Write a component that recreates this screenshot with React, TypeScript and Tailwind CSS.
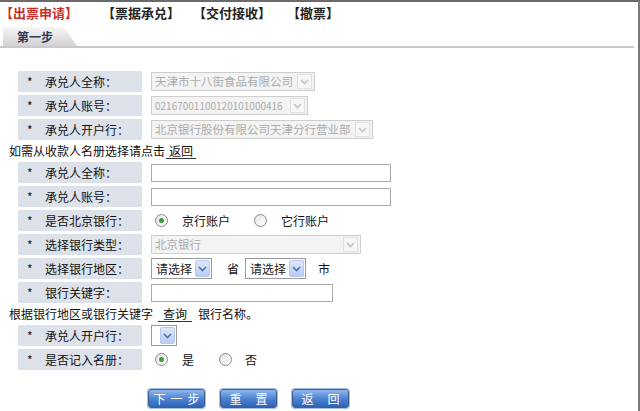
import React from 'react';

const font = "font-['SimSun','Noto_Sans_CJK_SC',sans-serif]";

function Chevron({ color }: { color: string }) {
  return (
    <svg width="9" height="6" viewBox="0 0 9 6">
      <path d="M1 1 L4.5 4.5 L8 1" fill="none" stroke={color} strokeWidth="1.6" />
    </svg>
  );
}

function DisabledSelect({ text, width, mono }: { text: string; width: string; mono?: boolean }) {
  return (
    <div className={`flex h-[19px] items-center border border-[#cdcdcd] bg-[#f3f3f3] ${width}`}>
      <span className={`min-w-0 flex-1 overflow-hidden whitespace-nowrap pl-[3px] text-[#ababab] ${mono ? 'text-[10px]' : 'text-[11.5px]'}`}>{text}</span>
      <span className="mr-[2px] flex h-[15px] w-[15px] shrink-0 items-center justify-center border border-[#e0e0e0] bg-[#f6f6f6]">
        <Chevron color="#c4c4c4" />
      </span>
    </div>
  );
}

function BlueSelect({ text, width }: { text: string; width: string }) {
  return (
    <div className={`flex h-[21px] items-center border border-[#9a9a9a] bg-white ${width}`}>
      <span className="flex-1 pl-[4px] text-[12px] text-[#222]">{text}</span>
      <span className="mr-[1px] flex h-[17px] w-[15px] items-center justify-center rounded-[2px] border border-[#b6c8ef] bg-gradient-to-b from-[#dfe8fb] to-[#b9cdf4]">
        <Chevron color="#4d6fb8" />
      </span>
    </div>
  );
}

function Radio({ checked }: { checked?: boolean }) {
  return (
    <span className="flex h-[13px] w-[13px] items-center justify-center rounded-full border border-[#8a8a8a] bg-gradient-to-br from-[#e4e4e4] to-white">
      {checked && <span className="h-[5px] w-[5px] rounded-full bg-[#3d9a3d]" />}
    </span>
  );
}

function Row({ label, children }: { label: string; children?: React.ReactNode }) {
  return (
    <div className="flex h-[21px] items-center">
      <div className="flex h-full w-[124px] items-center bg-[#dde2ea] text-[12px] text-[#111]">
        <span className="w-[27px] pl-[9px]">*</span>
        <span>{label}</span>
      </div>
      <div className="flex items-center pl-[9px]">{children}</div>
    </div>
  );
}

function Btn({ text, spacing }: { text: string; spacing: string }) {
  return (
    <div className={`flex h-[19px] w-[57px] items-center justify-center whitespace-nowrap rounded-[3px] border border-[#3b5e9c] bg-gradient-to-b from-[#8fb6ee] via-[#4f84d2] to-[#2f62b4] text-[12px] text-white shadow-[0_0_0_1px_#a7bde0] ${spacing}`}>
      {text}
    </div>
  );
}

export default function App() {
  return (
    <div className={`h-[411px] w-[640px] overflow-hidden border-t-2 border-r-2 border-t-[#6a6a6a] border-r-[#7a7a7a] bg-white ${font}`}>
      {/* top links */}
      <div className="flex h-[22px] items-center text-[13px] font-bold text-[#222]">
        <span className="w-[102px] text-[#c9302c]">【出票申请】</span>
        <span className="w-[91px]">【票据承兑】</span>
        <span className="w-[94px]">【交付接收】</span>
        <span>【撤票】</span>
      </div>

      {/* step tab */}
      <div className="mr-[4px] mt-[3px] flex items-end border-b-2 border-[#cacaca]">
        <div className="ml-[3px] flex h-[19px] w-[74px] items-center bg-gradient-to-b from-[#f6f6f6] to-[#d2d2d2] pl-[14px] text-[12px] font-bold text-[#2f3a55] [clip-path:polygon(0_0,82%_0,100%_100%,0_100%)]">
          第一步
        </div>
      </div>

      <div className="ml-[18px] mt-[23px] flex flex-col gap-[3px]">
        <Row label="承兑人全称：">
          <DisabledSelect text="天津市十八街食品有限公司" width="w-[164px]" />
        </Row>
        <Row label="承兑人账号：">
          <DisabledSelect text="02167001100120101000416" width="w-[157px]" mono />
        </Row>
        <Row label="承兑人开户行：">
          <DisabledSelect text="北京银行股份有限公司天津分行营业部" width="w-[222px]" />
        </Row>
      </div>

      <div className="ml-[9px] flex h-[22px] items-center text-[12px] text-[#111]">
        如需从收款人名册选择请点击<span className="ml-[1px] border-b border-[#333] px-[3px] leading-[14px]">返回</span>
      </div>

      <div className="ml-[18px] flex flex-col gap-[3px]">
        <Row label="承兑人全称：">
          <div className="h-[18px] w-[240px] border border-[#a9a9a9] bg-white" />
        </Row>
        <Row label="承兑人账号：">
          <div className="h-[18px] w-[240px] border border-[#a9a9a9] bg-white" />
        </Row>
        <Row label="是否北京银行：">
          <div className="flex items-center text-[12px] text-[#111]">
            <span className="ml-[4px]"><Radio checked /></span>
            <span className="ml-[14px]">京行账户</span>
            <span className="ml-[24px]"><Radio /></span>
            <span className="ml-[14px]">它行账户</span>
          </div>
        </Row>
        <Row label="选择银行类型：">
          <DisabledSelect text="北京银行" width="w-[210px]" />
        </Row>
        <Row label="选择银行地区：">
          <div className="flex items-center text-[12px] text-[#111]">
            <BlueSelect text="请选择" width="w-[61px]" />
            <span className="ml-[15px] mr-[6px]">省</span>
            <BlueSelect text="请选择" width="w-[61px]" />
            <span className="ml-[12px]">市</span>
          </div>
        </Row>
        <Row label="银行关键字：">
          <div className="h-[18px] w-[182px] border border-[#a9a9a9] bg-white" />
        </Row>
      </div>

      <div className="ml-[9px] flex h-[22px] items-center text-[12px] text-[#111]">
        根据银行地区或银行关键字
        <span className="ml-[5px] border-b border-[#333] px-[5px] leading-[14px]">查询</span>
        <span className="ml-[6px]">银行名称。</span>
      </div>

      <div className="ml-[18px] flex flex-col gap-[3px]">
        <Row label="承兑人开户行：">
          <BlueSelect text="" width="w-[26px]" />
        </Row>
        <Row label="是否记入名册：">
          <div className="flex items-center text-[12px] text-[#111]">
            <span className="ml-[4px]"><Radio checked /></span>
            <span className="ml-[14px]">是</span>
            <span className="ml-[25px]"><Radio /></span>
            <span className="ml-[13px]">否</span>
          </div>
        </Row>
      </div>

      <div className="ml-[148px] mt-[19px] flex gap-[15px]">
        <Btn text="下一步" spacing="tracking-[5px] pl-[5px]" />
        <Btn text="重置" spacing="tracking-[14px] pl-[14px]" />
        <Btn text="返回" spacing="tracking-[14px] pl-[14px]" />
      </div>
    </div>
  );
}
